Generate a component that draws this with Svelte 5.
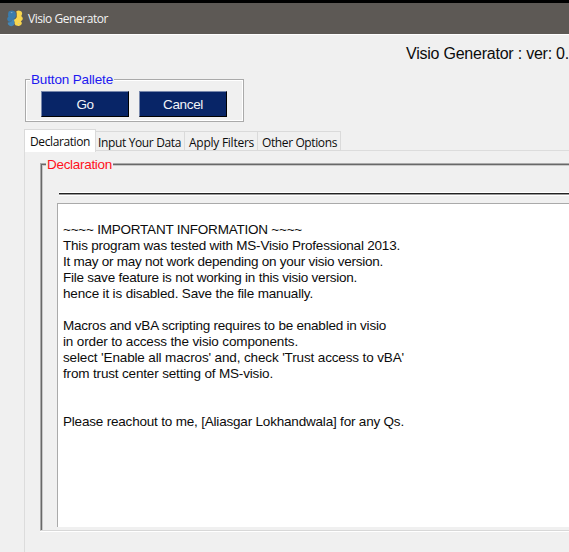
<script>
  const lines = [
    ['~~~~ IMPORTANT INFORMATION ~~~~', 239],
    ['This program was tested with MS-Visio Professional 2013.', 337],
    ['It may or may not work depending on your visio version.', 320],
    ['File save feature is not working in this visio version.', 294],
    ['hence it is disabled. Save the file manually.', 250],
    ['', 0],
    ['Macros and vBA scripting requires to be enabled in visio', 323],
    ['in order to access the visio components.', 235],
    ["select 'Enable all macros' and, check 'Trust access to vBA'", 341],
    ['from trust center setting of MS-visio.', 210],
    ['', 0],
    ['', 0],
    ['Please reachout to me, [Aliasgar Lokhandwala] for any Qs.', 341]
  ];
  const tabs = [['Input Your Data', 83, 89], ['Apply Filters', 65, 73], ['Other Options', 75, 83]];

  // Spreads the letters so that the run of text fills the given width.
  function fit(node, width) {
    const natural = node.getBoundingClientRect().width;
    const count = node.textContent.length;
    if (count && width) node.style.letterSpacing = (width - natural) / count + 'px';
  }
</script>

<div class="window">
  <header class="titlebar">
    <svg width="16" height="17" viewBox="0 0 16 17">
      <path d="M1.2 4 Q.8 1.2 3.4 .8 Q5.5 -.2 7.4 1.2 Q9.2 2 8.8 4.2 Q9.4 7 7.6 8.4 L5.6 9.2 Q4.6 9.8 4.2 11.4 Q1.8 12.4 .5 10.2 Q-.4 8 1.4 6.4 Q.8 5.4 1.2 4Z" fill="#3b7cad" />
      <path d="M.8 12.4 Q2.6 12.6 4.2 11.4 L5 9.6 L8 9 Q8.6 11 7.4 12.6 Q8 14.4 6.2 15.6 Q4 16.8 2.2 15.4 Q.4 14.4 .8 12.4Z" fill="#4488b8" />
      <path d="M9.2 1.4 Q11.4 -.3 13.4 1 Q15.6 1.8 15 4.2 Q14.8 5.4 14.2 6 Q16.3 7.4 15.6 9.6 Q15 11 13.8 11.2 Q15.5 12.6 14.4 14.6 Q12.8 16.6 10.6 15.8 Q8 16 7.6 13.4 Q8 12 7 10.6 Q7.2 9.4 8.6 8.8 Q10.2 7.6 9.7 5.2 Q10 3 9.2 1.4Z" fill="#f8d64e" />
      <path d="M3.8 2.6 H5.4 M11 13.6 H12.4" stroke="#a9c2cf" stroke-width=".7" />
    </svg>
    <span use:fit={80}>Visio Generator</span>
  </header>
  <h1><span use:fit={163}>Visio Generator : ver: 0.</span></h1>

  <section class="palette">
    <div class="legend blue"><span use:fit={82}>Button Pallete</span></div>
    <div class="buttons">
      <button><span use:fit={17}>Go</span></button>
      <button><span use:fit={40}>Cancel</span></button>
    </div>
  </section>

  <nav>
    <div class="tab active"><span use:fit={60}>Declaration</span></div>
    {#each tabs as [name, textWidth, width]}
      <div class="tab" style:width="{width}px"><span use:fit={textWidth}>{name}</span></div>
    {/each}
  </nav>

  <main>
    <section class="frame">
      <div class="legend red"><span use:fit={65}>Declaration</span></div>
      <div class="rule"></div>
      <div class="text">
        {#each lines as [line, width]}
          <div class="line"><span use:fit={width}>{line}</span></div>
        {/each}
      </div>
    </section>
  </main>
</div>

<style>
  :global(body) { margin: 0; overflow: hidden; }
  .window {
    width: 569px; height: 552px; overflow: hidden; background: #f0f0f0;
    display: flex; flex-direction: column; color: #0c0c0c;
    font-family: "Liberation Sans", Arial, sans-serif; font-size: 13.5px;
  }
  span { white-space: pre; display: inline-block; }
  .titlebar {
    box-sizing: border-box; height: 34px; flex: none; border-top: 3px solid #000;
    background: #5d5955; color: #f4f4f4; display: flex; align-items: center;
    padding-left: 7px; gap: 5px; font: 12px/18px "Open Sans", "Noto Sans", sans-serif;
  }
  .titlebar span { margin-top: 1px; }
  h1 {
    margin: 0; height: 38px; box-sizing: border-box; flex: none; padding: 10px 0 0 406px;
    border-top: 1px solid #fff; font-size: 16px; line-height: 18px; font-weight: 400;
  }
  .palette {
    box-sizing: border-box; width: 219px; height: 43px; margin: 7px 0 0 25px; flex: none;
    border: 1px solid #aaa;
    box-shadow: inset 1px 1px #fff, inset -1px -1px #fff;
  }
  .legend { width: max-content; height: 16px; line-height: 16px; background: #f0f0f0; }
  .blue { color: #2018f0; margin: -8px 0 0 4px; padding: 0 1px; }
  .buttons { display: flex; gap: 10px; padding: 3px 0 0 15px; }
  button {
    width: 88px; height: 26px; box-sizing: border-box; padding: 1px 0 0; background: #082567;
    color: #f2f4f8; font: 13.5px/18px "Liberation Sans", Arial, sans-serif;
    border: 1px solid #7888ac; border-right-color: #000; border-bottom-color: #000;
  }
  nav {
    display: flex; align-items: flex-end; height: 22px; margin: 7px 0 0 24px; flex: none;
    font: 500 12px/18px "Open Sans", "Noto Sans", sans-serif; box-shadow: inset 0 -1px #dcdcdc;
  }
  .tab {
    box-sizing: border-box; height: 20px; border: 1px solid #dadada; border-left: 0;
    padding: 2px 0 0 2px;
  }
  .tab:nth-child(n + 3) { padding-left: 4px; }
  .tab.active {
    width: 72px; height: 23px; background: #fff; border-left: 1px solid #dadada;
    border-bottom: 0; padding: 3px 0 0 5px; margin-bottom: -1px;
  }
  main { flex: 1; margin-left: 24px; border-left: 1px solid #dcdcdc; padding: 12px 0 0 15px; }
  .frame {
    box-sizing: border-box; width: 560px; height: 368px; border: 1px solid #aaa;
    border-bottom-color: #d8d8d8;
    box-shadow: inset 1px 1px #686868, inset 2px 2px #c8c8c8, 0 1px #fff; padding: 1px 0 0 16px;
  }
  .red { color: #ff1020; margin: -8px 0 0 -11px; padding: 0 1px; }
  .rule { height: 1px; margin: 20px 0 0 2px; background: #222; border-bottom: 1px solid #999; box-shadow: 0 -1px #fff, 0 1px #fff; }
  .text {
    box-sizing: border-box; height: 324px; margin-top: 8px; padding: 18px 0 0 5px;
    background: #fff; border-top: 1px solid #aaa; border-left: 1px solid #aaa;
  }
  .line { height: 16px; line-height: 16px; }
</style>
